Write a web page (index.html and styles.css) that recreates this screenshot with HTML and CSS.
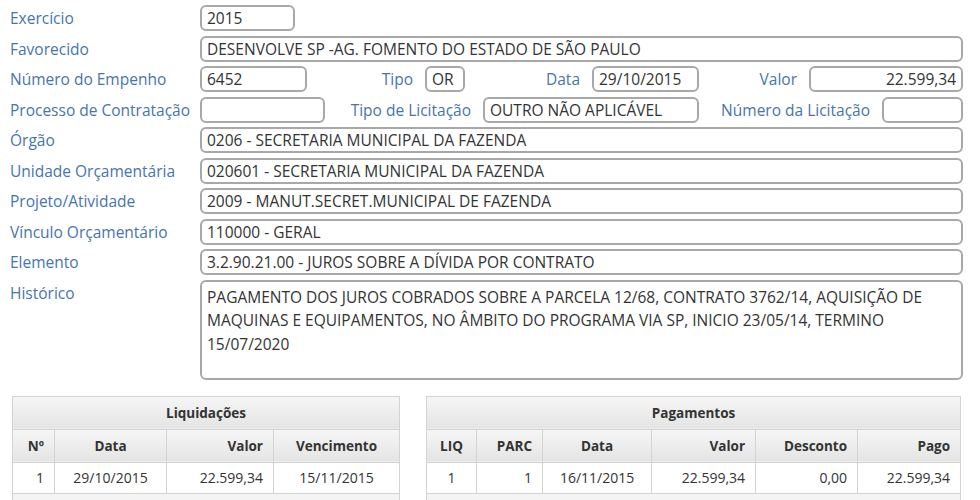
FILE: index.html
```html
<!DOCTYPE html>
<html lang="pt-BR">
<head>
  <meta charset="UTF-8">
  <title>Empenho 6452/2015</title>
  <link rel="stylesheet" href="styles.css">
</head>
<body>
  <form class="ficha">
    <div class="linha">
      <label class="rotulo">Exercício</label>
      <input class="campo" style="width: 95px" value="2015" readonly>
    </div>
    <div class="linha">
      <label class="rotulo">Favorecido</label>
      <input class="campo cheio" value="DESENVOLVE SP -AG. FOMENTO DO ESTADO DE SÃO PAULO" readonly>
    </div>
    <div class="linha">
      <label class="rotulo">Número do Empenho</label>
      <input class="campo" style="width: 107px" value="6452" readonly>
      <label class="sub" style="width: 118px">Tipo</label>
      <input class="campo" style="width: 40px" value="OR" readonly>
      <label class="sub" style="width: 127px">Data</label>
      <input class="campo" style="width: 107px" value="29/10/2015" readonly>
      <label class="sub" style="width: 110px">Valor</label>
      <input class="campo direita" style="width: 154px" value="22.599,34" readonly>
    </div>
    <div class="linha">
      <label class="rotulo">Processo de Contratação</label>
      <input class="campo" style="width: 125px" value="" readonly>
      <label class="sub" style="width: 158px">Tipo de Licitação</label>
      <input class="campo" style="width: 216px" value="OUTRO NÃO APLICÁVEL" readonly>
      <label class="sub" style="width: 183px">Número da Licitação</label>
      <input class="campo" style="width: 81px" value="" readonly>
    </div>
    <div class="linha">
      <label class="rotulo">Órgão</label>
      <input class="campo cheio" value="0206 - SECRETARIA MUNICIPAL DA FAZENDA" readonly>
    </div>
    <div class="linha">
      <label class="rotulo">Unidade Orçamentária</label>
      <input class="campo cheio" value="020601 - SECRETARIA MUNICIPAL DA FAZENDA" readonly>
    </div>
    <div class="linha">
      <label class="rotulo">Projeto/Atividade</label>
      <input class="campo cheio" value="2009 - MANUT.SECRET.MUNICIPAL DE FAZENDA" readonly>
    </div>
    <div class="linha">
      <label class="rotulo">Vínculo Orçamentário</label>
      <input class="campo cheio" value="110000 - GERAL" readonly>
    </div>
    <div class="linha">
      <label class="rotulo">Elemento</label>
      <input class="campo cheio" value="3.2.90.21.00 - JUROS SOBRE A DÍVIDA POR CONTRATO" readonly>
    </div>
    <div class="linha">
      <label class="rotulo">Histórico</label>
      <textarea class="campo cheio historico" readonly>PAGAMENTO DOS JUROS COBRADOS SOBRE A PARCELA 12/68, CONTRATO 3762/14, AQUISIÇÃO DE MAQUINAS E EQUIPAMENTOS, NO ÂMBITO DO PROGRAMA VIA SP, INICIO 23/05/14, TERMINO 15/07/2020</textarea>
    </div>
  </form>

  <div class="tabelas">
    <table class="grade liquidacoes">
      <colgroup>
        <col style="width: 42px"><col style="width: 112px"><col style="width: 107px"><col style="width: 126px">
      </colgroup>
      <thead>
        <tr><th colspan="4" class="titulo">Liquidações</th></tr>
        <tr>
          <th class="dir">Nº</th><th>Data</th><th class="dir">Valor</th><th>Vencimento</th>
        </tr>
      </thead>
      <tbody>
        <tr>
          <td class="dir">1</td><td>29/10/2015</td><td class="dir">22.599,34</td><td>15/11/2015</td>
        </tr>
      </tbody>
      <tfoot>
        <tr><td colspan="4"></td></tr>
      </tfoot>
    </table>

    <table class="grade pagamentos">
      <colgroup>
        <col style="width: 50px"><col style="width: 66px"><col style="width: 109px"><col style="width: 104px"><col style="width: 102px"><col style="width: 103px">
      </colgroup>
      <thead>
        <tr><th colspan="6" class="titulo">Pagamentos</th></tr>
        <tr>
          <th>LIQ</th><th class="dir">PARC</th><th>Data</th><th class="dir">Valor</th><th class="dir">Desconto</th><th class="dir">Pago</th>
        </tr>
      </thead>
      <tbody>
        <tr>
          <td>1</td><td class="dir">1</td><td>16/11/2015</td><td class="dir">22.599,34</td><td class="dir">0,00</td><td class="dir">22.599,34</td>
        </tr>
      </tbody>
      <tfoot>
        <tr><td colspan="6"></td></tr>
      </tfoot>
    </table>
  </div>
</body>
</html>
```

FILE: styles.css
```css
body { margin: 0; background: #fff; font-family: "Open Sans", Arial, sans-serif; color: #333; }

.ficha { padding: 5px 17px 0 10px; display: flex; flex-direction: column; gap: 4.5px; }
.linha { display: flex; align-items: flex-start; }
.rotulo { width: 190px; flex: none; line-height: 26px; font-size: 15.5px; color: #4675ae; white-space: nowrap; }
.sub { flex: none; box-sizing: border-box; padding-right: 12px; text-align: right; line-height: 26px; font-size: 15.5px; color: #4675ae; white-space: nowrap; }

.campo {
  box-sizing: border-box; height: 26px; margin: 0; padding: 0 5px;
  border: 2px solid #a8a8a8; border-radius: 6px; background: #fff;
  font-family: "Open Sans", Arial, sans-serif; font-size: 15.5px; color: #333;
  outline: none; flex: none;
}
.cheio { flex: 1; min-width: 0; }
.direita { text-align: right; }
.historico { height: 100px; padding: 4px 5px; line-height: 23.5px; resize: none; overflow: hidden; }

.tabelas { display: flex; gap: 26px; padding: 16px 0 0 12px; }
.grade { border-collapse: collapse; table-layout: fixed; }
.liquidacoes { width: 387px; }
.pagamentos { width: 534px; }
.grade th, .grade td { border: 1px solid #d3d3d3; padding: 0 10px; text-align: center; white-space: nowrap; }
.grade th { height: 32px; background: linear-gradient(#f6f6f6, #e4e4e4); font-size: 13.5px; font-weight: bold; color: #333; }
.grade td { height: 30px; background: #fff; font-size: 14px; }
.grade .dir { text-align: right; }
.grade tfoot td { background: #f4f4f4; }
```
